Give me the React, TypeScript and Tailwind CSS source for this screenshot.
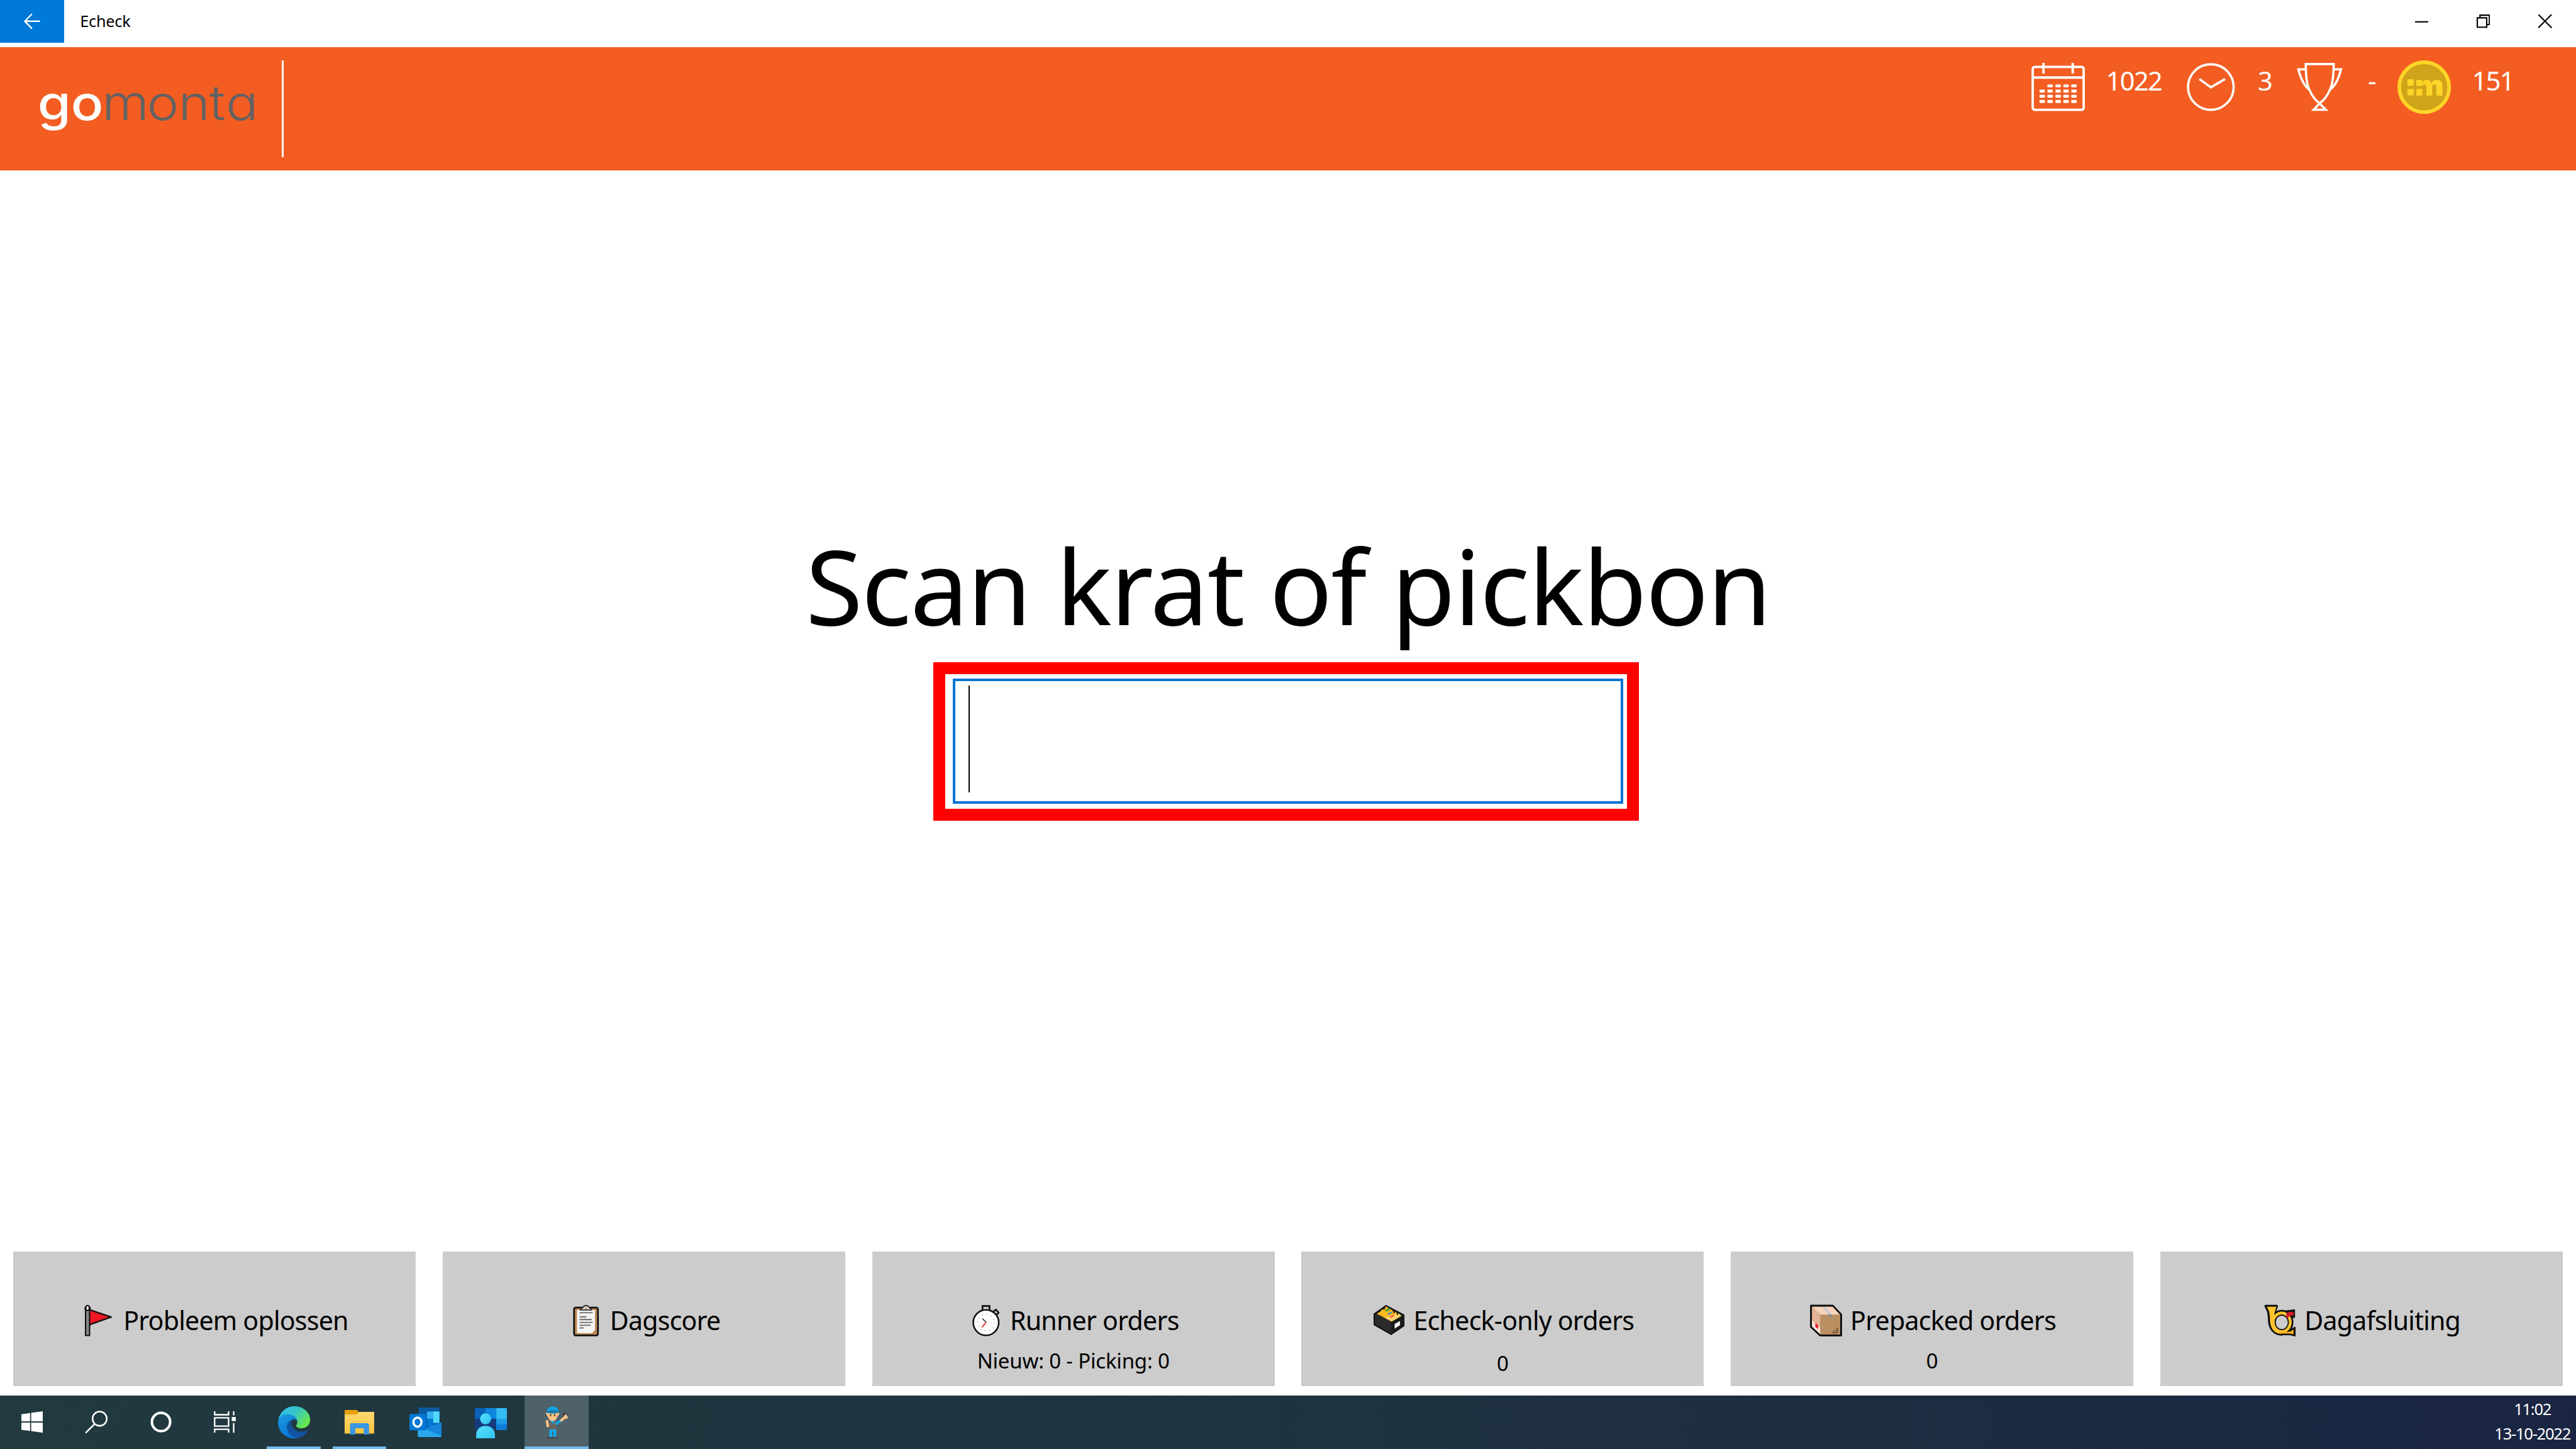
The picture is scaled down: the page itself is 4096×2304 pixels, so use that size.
import React from "react";

/* ---------- Header icons ---------- */

const dashCols = [8, 13.9, 19.9, 25.8, 31.7];
const dashRows = [17.1, 21, 24.9, 28.8];

function CalendarIcon() {
  return (
    <svg className="h-9 w-10" viewBox="0 0 40 36" fill="none" stroke="#fff" strokeWidth="1.8">
      <rect x="1" y="3" width="38" height="32" rx="1.6" />
      <path d="M1 10.9H39M9 0V8M30.8 0V8" />
      <g fill="#fff" stroke="none">
        {dashRows.map((y, r) =>
          dashCols.map((x, c) =>
            r === 0 && c === 0 ? null : <rect key={x + "-" + y} x={x - 2} y={y - 1.1} width="4.1" height="2.2" rx="0.7" />
          )
        )}
      </g>
    </svg>
  );
}

function ClockIcon() {
  return (
    <svg className="h-9 w-9" viewBox="0 0 36 36" fill="none" stroke="#fff" strokeWidth="1.7">
      <circle cx="18" cy="18" r="17" />
      <path d="M9.4 12L18 18.2L28.6 12" />
    </svg>
  );
}

function TrophyIcon() {
  return (
    <svg className="h-9 w-[34px]" viewBox="0 0 34 36" fill="none" stroke="#fff" strokeWidth="1.7">
      <path d="M6.7 .9H27.5C27.5 9 26.8 15 25 19.4C22.8 24.6 20.4 28 17 30C13.6 28 11.3 24.6 9.1 19.4C7.3 15 6.7 9 6.7 .9Z" />
      <path d="M7 4.8H1.2C2.8 11 5.2 17 9.3 19.8M27.3 4.8H33C31.4 11 29 17 24.8 19.8" />
      <path d="M17 30.2L12.6 34.9H21.6Z" />
    </svg>
  );
}

function CoinIcon() {
  return (
    <svg className="h-10 w-10" viewBox="0 0 40 40">
      <circle cx="20" cy="20" r="18.6" fill="#cfa41b" stroke="#ffd428" strokeWidth="2.7" />
      <g fill="#ffd428">
        <rect x="7.5" y="14.1" width="4.7" height="4.9" />
        <rect x="7.5" y="21.3" width="4.7" height="4.8" />
        <text x="12.9" y="26.1" fontFamily="Inter" fontWeight="900" fontSize="21.5" textLength="20.9" lengthAdjust="spacingAndGlyphs">
          m
        </text>
      </g>
      <rect x="13" y="19" width="5.9" height="2.3" fill="#cfa41b" />
    </svg>
  );
}

function Logo() {
  return (
    <svg className="h-[92px] w-[210px]" viewBox="0 35 210 92" fontFamily="Inter" style={{ fontFeatureSettings: '"cv11"' }}>
      <g transform="scale(1.12 1)">
        <text x="25 47.2" y="89.5" fontSize="35.8" fontWeight="500" fill="#fff">
          go
        </text>
        <text x="67.9 97.8 118.8 139.3 150.4" y="89.5" fontSize="35.8" fontWeight="300" fill="#626262">
          monta
        </text>
      </g>
    </svg>
  );
}

/* ---------- Tile icons ---------- */

function FlagIcon() {
  return (
    <svg className="h-6 w-[27px]" viewBox="0 0 27 24" stroke="#111" strokeWidth="1" strokeLinejoin="round">
      <path d="M5 3.6L22.4 9.4L5 15.6Z" fill="#ee1525" strokeWidth="1.1" />
      <path d="M3.3 4.2A1.8 2 0 1 1 6.3 4.2V23.2H3.3Z" fill="#888" />
      <ellipse cx="4.8" cy="2.7" rx="1.3" ry="1.9" fill="#f1f1f1" />
    </svg>
  );
}

function ClipboardIcon() {
  return (
    <svg className="h-6 w-[27px]" viewBox="0 0 27 24">
      <rect x="4.6" y="2.4" width="17.8" height="20.8" rx="1.3" fill="#c18955" stroke="#111" strokeWidth="1.3" />
      <path d="M6.8 4.2H20.2V19L18 21.4H6.8Z" fill="#f4f4f4" />
      <path d="M9.3 4.2C9.3 2.8 11.2 2.9 11.6 1.9C12 .5 15 .5 15.4 1.9C15.8 2.9 17.7 2.8 17.7 4.2Z" fill="#ddd" stroke="#222" strokeWidth=".8" />
      <circle cx="13.5" cy="2.9" r=".7" fill="#c18955" />
      <path d="M8.7 6.2H18.4M8.7 9.3H13.8M8.7 11.3H17.8M8.7 13.5H18.4M8.7 15.6H17M8.7 17.6H11.8" stroke="#777" strokeWidth="1" />
    </svg>
  );
}

function StopwatchIcon() {
  return (
    <svg className="h-6 w-[27px]" viewBox="0 0 27 24">
      <path d="M10.9 4.6V1.2H16.1V4.6M19 5.2L21 4L22.8 6.2L21.4 7.8" fill="#ccc" stroke="#111" strokeWidth="1.3" />
      <circle cx="13.5" cy="13.6" r="9.5" fill="#fff" stroke="#111" strokeWidth="1.2" />
      <circle cx="13.5" cy="13.6" r="6.2" fill="none" stroke="#bbb" strokeWidth=".8" strokeDasharray=".8 2.45" />
      <path d="M10.8 10.6L13.6 13.4" stroke="#444" strokeWidth=".9" />
      <path d="M13.6 13.4L10.4 17.2" stroke="#f03a4f" strokeWidth="1" />
    </svg>
  );
}

function CardBoxIcon() {
  return (
    <svg className="h-6 w-[27px]" viewBox="0 0 27 24" strokeLinejoin="round">
      <path d="M2.4 7.2L11.2 1L24.4 8V16L15 22.3L2.4 15.2Z" fill="#2b2b2b" stroke="#111" strokeWidth="1" />
      <path d="M4.4 7L11.2 1.6L22.6 8.4L15.4 12.8Z" fill="#ffb81f" />
      <path d="M10 10L20.8 6.8L22.6 8.8L15.4 12.8Z" fill="#ffd36b" />
      <path d="M11 4.9L13.8 3.4" stroke="#24a047" strokeWidth="1.2" />
      <path d="M12.6 7.4L15.4 6" stroke="#2588c9" strokeWidth="1.1" />
      <path d="M14.2 9.6L17 8.2" stroke="#f0503c" strokeWidth="1.1" />
      <path d="M7 5L5.2 5.8M10.4 2.4L9.2 4M16.4 4.4L17.4 6.6M19.6 6L20 8" stroke="#111" strokeWidth=".8" />
      <path d="M15 13.4L24 8.2V15.8L15 21.8Z" fill="#1a1a1a" />
      <path d="M17.6 14.6L21.6 12.4V15.6L17.6 18Z" fill="#f5f5f5" />
    </svg>
  );
}

function ParcelIcon() {
  return (
    <svg className="h-6 w-[27px]" viewBox="0 0 27 24" strokeLinejoin="round">
      <path d="M2.2 1H18.4L24.6 7.6V23.2H9L2.2 16.8Z" fill="#ba8f62" stroke="#111" strokeWidth="1.3" />
      <path d="M2.9 1.6H18.2L24 7.6H9Z" fill="#f6d2bb" />
      <path d="M2.9 1.8L9 7.6V22.4L2.9 16.6Z" fill="#e2b394" />
      <path d="M2.9 12L9 17.6V22.4L2.9 16.6Z" fill="#fbe6da" />
      <path d="M10.4 1.6H12.4L17.6 7.6V9H15.2V7.6Z" fill="#c3c9cd" />
      <path d="M15.2 7.6H17.6V9.2H15.2Z" fill="#7b8186" />
      <path d="M5.4 13.8L7.4 15.6V18.4L5.4 16.8Z" fill="#ee1525" />
      <path d="M2.2 1H18.4L24.6 7.6V23.2H9L2.2 16.8Z" fill="none" stroke="#111" strokeWidth="1.2" />
      <path d="M18 21H21.2M19 19.6H20M21.6 17.4V21.4" stroke="#6d5339" strokeWidth="1" />
    </svg>
  );
}

function HornIcon() {
  return (
    <svg className="h-6 w-[27px]" viewBox="0 0 27 24" fill="none" strokeLinejoin="round">
      <path d="M2.6 1.3H10.8L9.2 6.4V12C9.4 17 11 19.4 14.6 20V22.4C9 22.4 5.2 18 5.2 11C5.2 6 4.2 4 2.6 1.3Z" fill="#ffc42e" stroke="#111" strokeWidth="1.9" />
      <ellipse cx="14.6" cy="13.4" rx="6.4" ry="7" stroke="#111" strokeWidth="4.6" />
      <path d="M18 5L24 4.2V9.6L19 9.8ZM21.4 19L24.4 17.2V23.4L21.4 22.6Z" fill="#111" stroke="#111" />
      <path d="M13.6 22.3H22" stroke="#111" strokeWidth="1.4" />
      <path d="M3.4 1.8H10.6L9.2 6.4V12C9.4 17 11 19.4 14.6 20V22C9 22 5.8 18 5.8 11C5.8 6 4.8 4 3.4 1.8Z" fill="#ffc42e" />
      <ellipse cx="14.6" cy="13.4" rx="6.3" ry="6.9" stroke="#ffc42e" strokeWidth="2.2" />
      <ellipse cx="14.6" cy="13.4" rx="4.9" ry="5.4" fill="#ccc" stroke="#111" strokeWidth=".8" />
      <path d="M13.6 20.4H21L23.4 18.6V22.4L21 21.8H13.6Z" fill="#ffb01a" />
      <path d="M17.8 7L20 5.6L23.6 5.8V8.2L20.6 8.4L18.6 10.8Z" fill="#d3192a" />
    </svg>
  );
}

/* ---------- Taskbar icons ---------- */

function StartIcon() {
  return (
    <svg className="h-4 w-4" viewBox="0 0 16 16" fill="#fff">
      <path d="M0 2.2L6.5 1.3V7.5H0ZM7.3 1.2L16 0V7.5H7.3ZM0 8.4H6.5V14.7L0 13.8ZM7.3 8.4H16V16L7.3 14.8Z" />
    </svg>
  );
}

function SearchIcon() {
  return (
    <svg className="h-[17px] w-[17px]" viewBox="0 0 17 17" fill="none" stroke="#fff" strokeWidth="1.2">
      <circle cx="11" cy="6" r="5.3" />
      <path d="M7.3 9.9L.5 16.6" />
    </svg>
  );
}

function CortanaIcon() {
  return (
    <svg className="h-4 w-4" viewBox="0 0 16 16" fill="none" stroke="#fff" strokeWidth="1.9">
      <circle cx="8" cy="8" r="6.8" />
    </svg>
  );
}

function TaskViewIcon() {
  return (
    <svg className="h-4 w-[17px]" viewBox="0 0 17 16" fill="none" stroke="#fff" strokeWidth="1.1">
      <path d="M.6 0V2.6H11V0M.6 16V13.4H11V16M.6 4.9H11V11.1H.6ZM14.8 0V3M14.8 8.8V16" />
      <rect x="13.3" y="4.3" width="3.1" height="3" fill="#fff" stroke="none" />
    </svg>
  );
}

function EdgeIcon() {
  return (
    <svg className="h-6 w-6" viewBox="0 0 24 24">
      <defs>
        <linearGradient id="edgeTop" x1="0" y1="0" x2="1" y2=".6">
          <stop offset="0" stopColor="#35bdf0" />
          <stop offset=".5" stopColor="#33c4c9" />
          <stop offset="1" stopColor="#68ea4c" />
        </linearGradient>
        <linearGradient id="edgeLeft" x1="0" y1="0" x2=".6" y2="1">
          <stop offset="0" stopColor="#1c9ae0" />
          <stop offset="1" stopColor="#0873d6" />
        </linearGradient>
      </defs>
      <path d="M.2 10.5C1.4 4.2 6.2 0 12.2 0C19 0 24 4.8 24 10C24 14 21 16.4 17.6 16.4C15 16.4 13.5 15.4 13.5 14.5C13.5 14 14.4 13.6 14.4 11.7C14.4 9.2 11 6.2 7.2 6.2C3.8 6.2 1.2 8 .2 10.5Z" fill="url(#edgeTop)" />
      <path d="M0 12C.2 8.6 3.2 6 7.2 6C11.4 6 14.4 8.6 14.4 11.2C13.6 9.8 12.2 9.4 11 9.8L8 13C7 18 10.5 22.5 16 23.3C14.6 23.9 13.4 24 12 24C5.3 24 0 18.6 0 12Z" fill="url(#edgeLeft)" />
      <path d="M10.6 9.8C8 10.8 6.6 13 6.6 15.6C6.6 20 10 23.4 15.6 23.5C18.4 22.7 20.8 20.8 22.2 18.4C22.5 17.9 22.1 17.6 21.6 17.9C16 20.6 10 17.6 9.9 12.6C9.9 11.5 10.1 10.6 10.6 9.8Z" fill="#12529f" />
    </svg>
  );
}

function FolderIcon() {
  return (
    <svg className="h-[18.5px] w-[22px]" viewBox="0 0 22 18.5">
      <defs>
        <linearGradient id="folderFront" x1="0" y1="0" x2="0" y2="1">
          <stop offset="0" stopColor="#ffda70" />
          <stop offset="1" stopColor="#fdc43e" />
        </linearGradient>
      </defs>
      <path d="M0 0H9.2L10.2 1.2V3.6H0Z" fill="#e8a209" />
      <path d="M0 3.4H9L10.6 1.4H22V17.6H0Z" fill="url(#folderFront)" />
      <path d="M4 18.4V11A1.2 1.2 0 0 1 5.2 9.8H17A1.2 1.2 0 0 1 18.2 11V18.4H14.2V13.6H8V18.4Z" fill="#3b96e2" />
    </svg>
  );
}

function OutlookIcon() {
  return (
    <svg className="h-[22px] w-6" viewBox="0 0 24 22">
      <rect x="7" y="0" width="15.5" height="16" rx=".8" fill="#0c59a4" />
      <path d="M13 3H17.8V8.5H13Z" fill="#35b0f0" />
      <path d="M17.8 3H22.4V11.5H17.8Z" fill="#50d9ff" />
      <path d="M13 8.5H17.8V14H13Z" fill="#0078d4" />
      <path d="M24 11V21H12V15.6L17.8 13.6Z" fill="#1684dc" />
      <path d="M6.2 14L24 21V21.2A.8 .8 0 0 1 23.2 22H7A.8 .8 0 0 1 6.2 21.2Z" fill="#28a8ea" />
      <path d="M12 15.6L24 11V20.6Z" fill="#1684dc" />
      <rect x="0" y="4.8" width="12.4" height="12.2" rx=".8" fill="#0078d7" />
      <ellipse cx="6" cy="10.9" rx="3" ry="3.4" fill="none" stroke="#fff" strokeWidth="1.6" />
    </svg>
  );
}

function PeopleIcon() {
  return (
    <svg className="h-[22.5px] w-[24px]" viewBox="0 0 24 22.5">
      <defs>
        <linearGradient id="peopleBody" x1="0" y1="0" x2="1" y2="1">
          <stop offset="0" stopColor="#5ae4ff" />
          <stop offset="1" stopColor="#2fc1ef" />
        </linearGradient>
      </defs>
      <rect x="0" y="0" width="16.5" height="16" rx=".8" fill="#153c7c" />
      <path d="M.8 0H8V8H0V.8Z" fill="#0a62b9" />
      <path d="M8 0H16V8H8Z" fill="#0f87df" />
      <rect x="16" y="0" width="8" height="16.2" rx=".6" fill="#35bdf2" />
      <path d="M16 8H24V12H16Z" fill="#1e9ce8" />
      <path d="M16 12H24V15.6A.6 .6 0 0 1 23.4 16.2H16Z" fill="#0c7ddb" />
      <circle cx="8" cy="8" r="4.1" fill="url(#peopleBody)" />
      <path d="M1 22.5V20C1 15.8 4 13.2 8 13.2S15 15.8 15 20V22.5Z" fill="url(#peopleBody)" />
    </svg>
  );
}

function WorkerIcon() {
  return (
    <svg className="h-6 w-[17px]" viewBox="0 0 17 24">
      <path d="M1.2 10.4L2 15.6" stroke="#ffc387" strokeWidth="1.9" fill="none" />
      <path d="M0.2 5H10.8L7.6 10.4L5.5 11.4L3.4 10.4Z" fill="#ffc387" />
      <path d="M1 4.8C1.2 1.6 3 .2 5.5 .2S9.8 1.6 10 4.8L5.5 5.6Z" fill="#0fa5ea" />
      <path d="M1.6 3.8C4 2.6 7 2.6 9.4 3.8L9.8 5H1.2Z" fill="#1b78a8" />
      <path d="M4 5.8V7.4M7 5.8V7.4" stroke="#43342a" strokeWidth=".9" />
      <path d="M3 11.8H8V17.4H3Z" fill="#6b6560" />
      <path d="M4 11L5.6 13.2L7.2 11Z" fill="#12a4e8" />
      <path d="M7.6 13.4L11.8 10.6" stroke="#12a4e8" strokeWidth="1.9" />
      <path d="M11.4 11L15 8M14.4 6.6L16.4 9" stroke="#ffc387" strokeWidth="1.9" />
      <path d="M13.4 7L14.6 5" stroke="#3a2426" strokeWidth="1" />
      <path d="M3 17.3H8.2V23H6.1V18.6H5.3V23H3Z" fill="#12a9f0" />
      <path d="M1.6 23.4H9.4" stroke="#4a3f3c" strokeWidth=".9" />
    </svg>
  );
}

/* ---------- Layout ---------- */

function TitleBar() {
  return (
    <div className="flex h-[35px] shrink-0 items-start bg-white">
      <div className="flex h-8 w-12 items-center justify-center bg-[#0078d7]">
        <svg className="h-3 w-3" viewBox="0 0 12 12" fill="none" stroke="#fff" strokeWidth="1.1">
          <path d="M12 6H.8M6 .6L.7 6L6 11.4" />
        </svg>
      </div>
      <span className="ml-[11.7px] text-[11.8px] leading-[31px] tracking-[-0.1px] text-black">Echeck</span>
      <div className="ml-auto flex h-8 text-black">
        <div className="flex w-[46px] items-center justify-center">
          <svg className="h-[10px] w-[10px]" viewBox="0 0 10 10" stroke="currentColor">
            <path d="M0 5.5H10" />
          </svg>
        </div>
        <div className="flex w-[46px] items-center justify-center">
          <svg className="h-[10px] w-[10px]" viewBox="0 0 10 10" fill="none" stroke="currentColor">
            <path d="M.5 2.5H7.5V9.5H.5ZM2.5 2.5V.5H9.5V7.5H7.5" />
          </svg>
        </div>
        <div className="flex w-[46px] items-center justify-center">
          <svg className="h-[10px] w-[10px]" viewBox="0 0 10 10" fill="none" stroke="currentColor">
            <path d="M0 0L10 10M10 0L0 10" />
          </svg>
        </div>
      </div>
    </div>
  );
}

function Header() {
  return (
    <header className="flex h-[92px] shrink-0 items-start bg-[#f35d22]">
      <Logo />
      <div className="mt-[10px] h-[72px] w-[1.3px] bg-white" />
      <div className="ml-auto flex items-start text-[19.5px] leading-[27px] tracking-[-0.8px] text-white">
        <div className="mt-3"><CalendarIcon /></div>
        <span className="mt-[11.8px] w-[76px] pl-[15.7px]">1022</span>
        <div className="mt-3"><ClockIcon /></div>
        <span className="mt-[11.8px] w-[46px] pl-[16.8px]">3</span>
        <div className="mt-3"><TrophyIcon /></div>
        <span className="mt-[11.8px] w-[41px] pl-[19px]">-</span>
        <div className="mt-[9.8px]"><CoinIcon /></div>
        <span className="mt-[11.8px] w-[93px] pl-[15.5px]">151</span>
      </div>
    </header>
  );
}

function ScanPanel() {
  return (
    <main className="flex min-h-0 flex-1 flex-col items-center bg-white pt-[259px]">
      <h1 className="text-[77.5px] leading-[100px] tracking-[-0.9px] whitespace-nowrap text-black">Scan krat of pickbon</h1>
      <div className="relative mt-[20px] h-[93px] w-[500px] border-2 border-[#0073d5] bg-white pt-[3px] pl-[10px]">
        <div className="h-[80px] w-px bg-black" />
        <div className="absolute -top-[14.3px] -right-[13.5px] -bottom-[14.4px] -left-[16.2px] border-[9.3px] border-[#ff0000]" />
      </div>
    </main>
  );
}

type Tile = { label: string; icon: React.ReactNode; sub?: string; low?: boolean };

const tiles: Tile[] = [
  { label: "Probleem oplossen", icon: <FlagIcon /> },
  { label: "Dagscore", icon: <ClipboardIcon /> },
  { label: "Runner orders", icon: <StopwatchIcon />, sub: "Nieuw: 0 - Picking: 0" },
  { label: "Echeck-only orders", icon: <CardBoxIcon />, sub: "0", low: true },
  { label: "Prepacked orders", icon: <ParcelIcon />, sub: "0" },
  { label: "Dagafsluiting", icon: <HornIcon /> },
];

function TileRow() {
  return (
    <div className="grid shrink-0 grid-cols-6 gap-x-5 bg-white px-[10px] pb-[7px]">
      {tiles.map((t) => (
        <button key={t.label} className="flex h-[100px] flex-col items-center justify-start bg-[#cccccc] pt-[37.6px] text-black">
          <span className="flex h-[27px] items-center gap-[4.5px] text-[19.3px] leading-[27px] tracking-[-0.38px] whitespace-nowrap">
            {t.icon}
            {t.label}
          </span>
          {t.sub && (
            <span className={(t.low ? "mt-[8.5px]" : "mt-[6.5px]") + " text-[15.5px] leading-[21px] tracking-[-0.1px]"}>{t.sub}</span>
          )}
        </button>
      ))}
    </div>
  );
}

function Taskbar() {
  return (
    <footer className="flex h-10 shrink-0 bg-linear-to-r from-[#21393f] via-[#1f333f] to-[#1a2543]">
      <div className="flex">
        <div className="flex w-12 items-center justify-center"><StartIcon /></div>
        <div className="flex w-12 items-center justify-center"><SearchIcon /></div>
        <div className="flex w-12 items-center justify-center"><CortanaIcon /></div>
        <div className="flex w-12 items-center justify-center"><TaskViewIcon /></div>
      </div>
      <div className="ml-[3px] flex gap-px">
        <div className="flex w-12 flex-col items-center">
          <div className="flex h-[38px] items-center pt-[2px]"><EdgeIcon /></div>
          <div className="h-[2px] w-10 bg-[#76b9ed]" />
        </div>
        <div className="flex w-12 flex-col items-center">
          <div className="flex h-[38px] items-center pt-[2px]"><FolderIcon /></div>
          <div className="h-[2px] w-10 bg-[#76b9ed]" />
        </div>
        <div className="flex w-12 items-center justify-center"><OutlookIcon /></div>
        <div className="flex w-12 items-center justify-center pt-[2px]"><PeopleIcon /></div>
        <div className="flex w-12 flex-col items-center bg-[#506269]">
          <div className="flex h-[38px] items-center pt-[2px]"><WorkerIcon /></div>
          <div className="h-[2px] w-12 bg-[#76b9ed]" />
        </div>
      </div>
      <div className="ml-auto flex w-[65px] flex-col items-center pt-[1.3px] text-[12px] leading-[18px] tracking-[-0.6px] whitespace-nowrap text-white">
        <span>11:02</span>
        <span>13-10-2022</span>
      </div>
    </footer>
  );
}

export default function App() {
  return (
    <div className="flex h-[1080px] w-[1920px] flex-col overflow-hidden bg-white font-['Noto_Sans',sans-serif] [zoom:2.1333333]">
      <TitleBar />
      <Header />
      <ScanPanel />
      <TileRow />
      <Taskbar />
    </div>
  );
}
